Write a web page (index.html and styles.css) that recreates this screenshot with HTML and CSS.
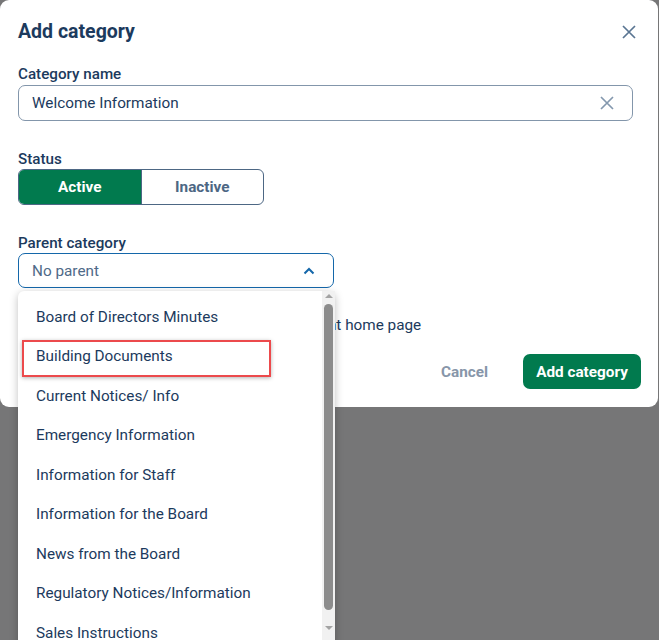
FILE: index.html
```html
<!DOCTYPE html>
<html>
<head>
<meta charset="utf-8">
<link rel="stylesheet" href="styles.css">
</head>
<body>
<div class="modal">
  <div class="header">
    <h1 class="title">Add category</h1>
    <svg class="close" width="14" height="14" viewBox="0 0 14 14"><path d="M1 1L13 13M13 1L1 13" stroke="#5a7592" stroke-width="1.7" fill="none"/></svg>
  </div>

  <label class="label first">Category name</label>
  <div class="input">
    <span class="value">Welcome Information</span>
    <svg class="clear" width="14" height="14" viewBox="0 0 14 14"><path d="M1 1L13 13M13 1L1 13" stroke="#8498ae" stroke-width="1.7" fill="none"/></svg>
  </div>

  <label class="label">Status</label>
  <div class="toggle">
    <span class="seg on">Active</span>
    <span class="seg off">Inactive</span>
  </div>

  <label class="label">Parent category</label>
  <div class="select-wrap">
    <div class="select">
      <span class="placeholder">No parent</span>
      <svg class="chev" width="12" height="8" viewBox="0 0 12 8"><path d="M1.5 6.5L6 2L10.5 6.5" stroke="#1467aa" stroke-width="2" fill="none"/></svg>
    </div>
    <div class="dropdown">
      <ul class="options">
        <li>Board of Directors Minutes</li>
        <li class="marked"><span class="mark"></span>Building Documents</li>
        <li>Current Notices/ Info</li>
        <li>Emergency Information</li>
        <li>Information for Staff</li>
        <li>Information for the Board</li>
        <li>News from the Board</li>
        <li>Regulatory Notices/Information</li>
        <li>Sales Instructions</li>
      </ul>
      <div class="scrollbar">
        <span class="arrow up"></span>
        <span class="thumb"></span>
        <span class="arrow down"></span>
      </div>
    </div>
  </div>

  <div class="check-row">
    <span class="box"></span>
    <span class="check-text">Make this category visible on the resident home page</span>
  </div>

  <div class="actions">
    <button class="btn cancel">Cancel</button>
    <button class="btn primary">Add category</button>
  </div>
</div>
</body>
</html>
```

FILE: styles.css
```css
* { box-sizing: border-box; }
html, body {
  margin: 0;
  padding: 0;
  width: 659px;
  height: 640px;
  overflow: hidden;
  background: #767677;
  font-family: Roboto, "Noto Sans", Arial, sans-serif;
  color: #1c3a5d;
}
.modal {
  width: 658px;
  background: #fff;
  border-radius: 9px;
  padding: 20px 17px 18px 18px;
  display: flex;
  flex-direction: column;
}
.header {
  display: flex;
  justify-content: space-between;
  align-items: center;
  height: 24px;
}
.title {
  margin: 0;
  font-size: 19.5px;
  font-weight: 700;
  line-height: 24px;
  color: #1c3a5d;
}
.close { margin-right: 5px; margin-top: -1px; }
.label {
  display: block;
  font-size: 15.2px;
  font-weight: 500;
  line-height: 18px;
  margin-top: 29px;
  margin-bottom: 1px;
  color: #1c3a5d;
}
.label.first { margin-top: 21px; margin-bottom: 2px; }
.input {
  height: 36px;
  width: 615px;
  border: 1px solid #8396ab;
  border-radius: 7px;
  display: flex;
  align-items: center;
  justify-content: space-between;
  padding: 0 18px 1px 13px;
}
.value { font-size: 15.3px; color: #1c3a5d; }
.toggle {
  display: flex;
  width: 246px;
  height: 36px;
  border: 1px solid #4d6784;
  border-radius: 6px;
  overflow: hidden;
}
.seg {
  flex: 1;
  display: flex;
  align-items: center;
  justify-content: center;
  font-size: 15.3px;
  font-weight: 700;
}
.seg.on { background: #017a4e; color: #fff; }
.seg.off { color: #4d6784; border-left: 1px solid #4d6784; }
.select-wrap { position: relative; }
.select {
  width: 316px;
  height: 35px;
  border: 1px solid #1467aa;
  border-radius: 7px;
  display: flex;
  align-items: center;
  justify-content: space-between;
  padding: 0 18px 0 13px;
}
.placeholder { font-size: 15.3px; color: #4f6a88; }
.dropdown {
  position: absolute;
  left: 0;
  top: 38px;
  width: 317px;
  height: 360px;
  background: #fff;
  border-radius: 6px;
  box-shadow: 0 2px 8px rgba(0,0,0,0.25);
  display: flex;
  z-index: 5;
}
.options {
  list-style: none;
  margin: 0;
  padding: 6.5px 0 0 0;
  flex: 1;
}
.options li {
  position: relative;
  height: 39.5px;
  line-height: 39.5px;
  padding-left: 18px;
  font-size: 15.3px;
  color: #1c3a5d;
  white-space: nowrap;
}
.mark {
  position: absolute;
  left: 4px;
  top: 2.5px;
  width: 249px;
  height: 37px;
  border: 2px solid #ec4a4c;
  box-shadow: 0 1px 4px rgba(0,0,0,0.3);
}
.scrollbar {
  width: 13px;
  background: #f1f1f1;
  display: flex;
  flex-direction: column;
  align-items: center;
  padding-top: 3px;
}
.arrow {
  width: 0;
  height: 0;
  border-left: 4px solid transparent;
  border-right: 4px solid transparent;
}
.arrow.up { border-bottom: 4px solid #a3a3a3; }
.arrow.down { border-top: 4px solid #a3a3a3; margin-top: 16px; }
.thumb {
  width: 9px;
  height: 306px;
  margin-top: 6px;
  background: #8c8c8c;
  border-radius: 5px;
}
.check-row {
  display: flex;
  align-items: center;
  gap: 12px;
  margin-top: 27px;
  height: 20px;
  padding-left: 12px;
}
.box {
  width: 18px;
  height: 18px;
  border: 1px solid #4d6784;
  border-radius: 3px;
}
.check-text { font-size: 15.3px; color: #1c3a5d; white-space: nowrap; }
.actions {
  display: flex;
  justify-content: flex-end;
  align-items: center;
  gap: 35px;
  margin-top: 19px;
}
.btn {
  font-family: Roboto, "Noto Sans", Arial, sans-serif;
  font-size: 15.3px;
  font-weight: 700;
  border: none;
  background: none;
  padding: 0;
  cursor: pointer;
}
.cancel { color: #8796a9; }
.primary {
  background: #017a4e;
  color: #fff;
  height: 35px;
  width: 118px;
  border-radius: 7px;
}
```
